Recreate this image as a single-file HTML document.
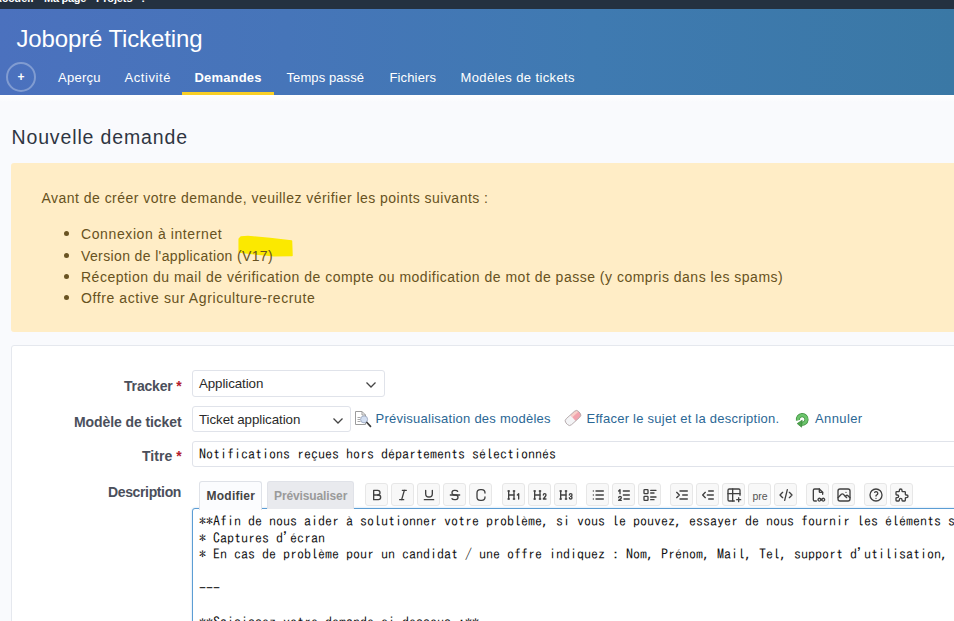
<!DOCTYPE html>
<html lang="fr">
<head>
<meta charset="utf-8">
<title>Nouvelle demande - Jobopré Ticketing</title>
<style>
html,body{margin:0;padding:0;}
body{width:954px;height:621px;overflow:hidden;position:relative;background:#f9fafd;font-family:"Liberation Sans",sans-serif;color:#2f3542;}
.abs{position:absolute;white-space:nowrap;}
.t{position:absolute;white-space:nowrap;line-height:1;}
#top{left:0;top:0;width:954px;height:9px;background:#243140;overflow:hidden;}
#top .t{color:#fff;font-weight:bold;font-size:11px;top:-7px;}
#header{left:0;top:9px;width:954px;height:86px;background:linear-gradient(90deg,#4b71be 0%,#4675b9 30%,#3f7ab1 62%,#3a78a5 100%);}
#ptitle{left:16.5px;top:27px;font-size:24px;color:#fff;}
#plus{left:6px;top:62px;width:26px;height:26px;border:2px solid rgba(255,255,255,.3);border-radius:50%;}
#plus span{position:absolute;left:0;top:0;width:26px;height:26px;line-height:27px;text-align:center;color:#fff;font-size:12px;font-weight:bold;}
.mi{color:#fff;font-size:13px;top:71px;}
#underline{left:182px;top:92px;width:92px;height:3px;background:#f9cf25;}
#h2{left:11.5px;top:127.5px;font-size:19.5px;color:#2f3542;}
#flash{left:11px;top:163px;width:960px;height:169px;background:#ffedc6;border-radius:3px;}
.ft{color:#675221;font-size:14px;}
.bul{width:5px;height:5px;border-radius:50%;background:#6a5422;left:64px;}
#hl{left:236px;top:234px;}
#box{left:11px;top:345px;width:960px;height:300px;background:#fff;border:1px solid #e5e8ee;border-radius:3px;box-sizing:border-box;}
.lab{font-weight:bold;font-size:14px;color:#4b4f5b;text-align:right;}
.req{color:#b3202c;}
.sel{background:#fff;border:1px solid #e0e3ea;border-radius:3px;box-sizing:border-box;}
.sel .t{font-size:13.33px;color:#2a2a2a;left:6px;}
.sel .t.mono{font-size:14px;color:#111;}
.lnk{color:#2b6795;font-size:13px;}
.mono{font-family:"IPAGothic","Liberation Mono",monospace;font-size:14px;color:#111;}
#ta{left:192px;top:508px;width:800px;height:140px;background:#fff;border:1px solid #5c9dd4;box-shadow:0 0 2px rgba(92,157,212,.45);border-radius:3px;box-sizing:border-box;}
.tab{box-sizing:border-box;font-weight:bold;font-size:12px;}
.jb{width:23px;height:23px;box-sizing:border-box;border:1px solid #e7e7e7;border-radius:3px;background:#f8f8f8;top:483px;}
.jb svg{position:absolute;left:3px;top:2.5px;width:16px;height:16px;fill:none;stroke:#404040;stroke-width:2;stroke-linecap:round;stroke-linejoin:round;}
.ap{display:inline-block;width:7px;overflow:visible;}
.jb .pre{font-size:10.5px;color:#555;left:3.5px;top:7px;}
/*CAL*/
#ptitle{letter-spacing:-0.132px;}
#m1{letter-spacing:0.259px;}
#m2{letter-spacing:0.585px;}
#m3{letter-spacing:0.179px;}
#m4{letter-spacing:0.091px;}
#m5{letter-spacing:0.141px;}
#m6{letter-spacing:0.372px;}
#h2{letter-spacing:0.866px;}
#f0{letter-spacing:0.470px;}
#f1{letter-spacing:0.605px;}
#f2{letter-spacing:0.372px;}
#f3{letter-spacing:0.499px;}
#f4{letter-spacing:0.593px;}
#l1{letter-spacing:-0.171px;}
#l2{letter-spacing:-0.088px;}
#l3{letter-spacing:0.027px;}
#l4{letter-spacing:-0.362px;}
#k1{letter-spacing:0.249px;}
#k2{letter-spacing:0.252px;}
#k3{letter-spacing:0.398px;}
#tab1t{letter-spacing:0.247px;}
#tab2t{letter-spacing:-0.118px;}
#tm1{letter-spacing:0.060px;}
#tm2{letter-spacing:-0.269px;}
#tm3{letter-spacing:-0.133px;}
#s1t{letter-spacing:-0.090px;}
#s2t{letter-spacing:-0.070px;}
/*ENDCAL*/
</style>
</head>
<body>
<div id="top" class="abs">
  <span class="t" id="tm1" style="left:-6px">Accueil</span>
  <span class="t" id="tm2" style="left:44px">Ma page</span>
  <span class="t" id="tm3" style="left:96px">Projets</span>
  <span class="t" id="tm4" style="left:140px">?</span>
</div>
<div id="header" class="abs"></div>
<div id="ptitle" class="t">Jobopré Ticketing</div>
<div id="plus" class="abs"><span>+</span></div>
<span class="t mi" id="m1" style="left:58px">Aperçu</span>
<span class="t mi" id="m2" style="left:124.5px">Activité</span>
<span class="t mi" id="m3" style="left:194.5px;font-weight:bold">Demandes</span>
<span class="t mi" id="m4" style="left:286.5px">Temps passé</span>
<span class="t mi" id="m5" style="left:389.5px">Fichiers</span>
<span class="t mi" id="m6" style="left:460.5px">Modèles de tickets</span>
<div id="underline" class="abs"></div>

<div class="abs" style="left:0;top:95px;width:954px;height:7px;background:linear-gradient(180deg,#ffffff,#f9fafd)"></div>
<div id="h2" class="t">Nouvelle demande</div>

<div id="flash" class="abs"></div>
<span class="t ft" id="f0" style="left:41.5px;top:191px">Avant de créer votre demande, veuillez vérifier les points suivants :</span>
<div class="abs bul" style="top:231px"></div>
<div class="abs bul" style="top:253px"></div>
<div class="abs bul" style="top:274px"></div>
<div class="abs bul" style="top:295px"></div>
<svg id="hl" class="abs" width="60" height="26" viewBox="0 0 60 26"><path d="M3.2 5 L5 3 L12 2.5 L34 4.5 L55.5 7 L56 21.5 L38 21.8 L20 20 L3.2 18 Z" fill="#fbe900" stroke="#fbe900" stroke-width="1.5" stroke-linejoin="round"/></svg>
<span class="t ft" id="f1" style="left:81px;top:227px">Connexion à internet</span>
<span class="t ft" id="f2" style="left:81px;top:249px">Version de l'application (V17)</span>
<span class="t ft" id="f3" style="left:81px;top:270px">Réception du mail de vérification de compte ou modification de mot de passe (y compris dans les spams)</span>
<span class="t ft" id="f4" style="left:81px;top:291px">Offre active sur Agriculture-recrute</span>

<div id="box" class="abs"></div>
<span class="t lab" id="l1" style="left:124px;top:379px">Tracker <span class="req">*</span></span>
<span class="t lab" id="l2" style="left:74px;top:415px">Modèle de ticket</span>
<span class="t lab" id="l3" style="left:142px;top:449px">Titre <span class="req">*</span></span>
<span class="t lab" id="l4" style="left:108px;top:485px">Description</span>

<div class="abs sel" id="s1" style="left:192px;top:370px;width:193px;height:27px"><span class="t" id="s1t" style="top:6px">Application</span>
<svg class="abs" style="left:172px;top:10px" width="12" height="8" viewBox="0 0 12 8"><path d="M1.5 1.5 L6 6 L10.5 1.5" fill="none" stroke="#444" stroke-width="1.25"/></svg></div>
<div class="abs sel" id="s2" style="left:192px;top:406px;width:159px;height:26px"><span class="t" id="s2t" style="top:6px">Ticket application</span>
<svg class="abs" style="left:139px;top:10px" width="12" height="8" viewBox="0 0 12 8"><path d="M1.5 1.5 L6 6 L10.5 1.5" fill="none" stroke="#444" stroke-width="1.25"/></svg></div>

<svg class="abs" id="ic1" style="left:354px;top:410px" width="18" height="18" viewBox="0 0 18 18"><path d="M1.5 1.5H8L11.5 5V14.5H1.5Z" fill="#fff" stroke="#9c9c9c" stroke-width="1"/><path d="M8 1.5V5H11.5" fill="none" stroke="#9c9c9c" stroke-width="1"/><path d="M3.5 7.5H6.5M3.5 9.5H6.5M3.5 11.5H6.5" stroke="#a8a8a8" stroke-width="1"/><circle cx="10.1" cy="9.4" r="3.5" fill="#d3dff2" stroke="#a4b0c6" stroke-width="1"/><path d="M12.9 12.5L16.5 16.3" stroke="#3a3a3a" stroke-width="1.7" stroke-linecap="round"/></svg>
<svg class="abs" id="ic2" style="left:564px;top:409px" width="19" height="18" viewBox="0 0 19 18"><defs><clipPath id="erc"><rect x="-8.5" y="-4" width="17" height="8" rx="3"/></clipPath></defs><g transform="translate(9,9) rotate(-42)"><g clip-path="url(#erc)"><rect x="-8.5" y="-4" width="9" height="8" fill="#f4f4f6"/><rect x="0" y="-4" width="9" height="8" fill="#f2a3ad"/><rect x="0" y="-4" width="9" height="3" fill="#f8cfc9"/></g><rect x="-8.5" y="-4" width="17" height="8" rx="3" fill="none" stroke="#b4a9ab" stroke-width="0.9"/></g></svg>
<svg class="abs" id="ic3" style="left:794px;top:411px" width="17" height="18" viewBox="0 0 17 18"><path d="M4.0 9.3A4.3 4.3 0 1 1 7.2 12.6" fill="none" stroke="#3f8f3f" stroke-width="4.2" stroke-linecap="butt"/><path d="M4.0 9.3A4.3 4.3 0 1 1 7.2 12.6" fill="none" stroke="#6cc46c" stroke-width="2.8" stroke-linecap="butt"/><path d="M8.2 9.2L3.2 12.6L7.6 16.2Z" fill="#4da54d" stroke="#3a873a" stroke-width="0.7" stroke-linejoin="round"/></svg>
<span class="t lnk" id="k1" style="left:375.5px;top:412px">Prévisualisation des modèles</span>
<span class="t lnk" id="k2" style="left:586.5px;top:412px">Effacer le sujet et la description.</span>
<span class="t lnk" id="k3" style="left:815px;top:412px">Annuler</span>

<div class="abs sel" id="s3" style="left:192px;top:441px;width:800px;height:26px"><span class="t mono" id="s3t" style="left:6px;top:5px">Notifications reçues hors départements sélectionnés</span></div>

<div id="ta" class="abs"></div>
<div class="abs tab" id="tab2" style="left:266.5px;top:481px;width:87.5px;height:28px;background:#e9eaee;border:1px solid #e0e2e8;border-bottom:none;border-radius:3px 3px 0 0;color:#9a9a9a"><span class="t" id="tab2t" style="left:6.5px;top:8px">Prévisualiser</span></div>
<div class="abs tab" id="tab1" style="left:199px;top:481px;width:62.5px;height:29px;background:#fbfcfe;border:1px solid #dfe2e8;border-bottom:none;border-radius:3px 3px 0 0;color:#444"><span class="t" id="tab1t" style="left:6.5px;top:8px">Modifier</span></div>

<!--TB-->
<div class="abs jb" style="left:365.2px"><svg viewBox="0 0 24 24"><path d="M7 5h6a3.5 3.5 0 0 1 0 7h-6z"/><path d="M13 12h1a3.5 3.5 0 0 1 0 7h-7v-7"/></svg></div>
<div class="abs jb" style="left:391.2px"><svg viewBox="0 0 24 24"><path d="M11 5h6"/><path d="M7 19h6"/><path d="M14 5l-4 14"/></svg></div>
<div class="abs jb" style="left:417.3px"><svg viewBox="0 0 24 24"><path d="M7 5v5a5 5 0 0 0 10 0v-5"/><path d="M5 19h14"/></svg></div>
<div class="abs jb" style="left:443.4px"><svg viewBox="0 0 24 24"><path d="M5 12h14"/><path d="M16 6.5a4 2 0 0 0 -4 -1.5h-1a3.5 3.5 0 0 0 0 7h2a3.5 3.5 0 0 1 0 7h-1.5a4 2 0 0 1 -4 -1.5"/></svg></div>
<div class="abs jb" style="left:469.4px"><svg viewBox="0 0 24 24"><path d="M18 9a5 5 0 0 0 -5 -5h-2a5 5 0 0 0 -5 5v6a5 5 0 0 0 5 5h2a5 5 0 0 0 5 -5"/></svg></div>
<div class="abs jb" style="left:501.5px"><svg viewBox="0 0 24 24"><path d="M19 18v-8l-2 2"/><path d="M4 6v12"/><path d="M12 6v12"/><path d="M11 18h2"/><path d="M3 18h2"/><path d="M4 12h8"/><path d="M3 6h2"/><path d="M11 6h2"/></svg></div>
<div class="abs jb" style="left:527.5px"><svg viewBox="0 0 24 24"><path d="M17 12a2 2 0 1 1 4 0c0 .591 -.417 1.318 -.816 1.858l-3.184 4.143h4"/><path d="M4 6v12"/><path d="M12 6v12"/><path d="M11 18h2"/><path d="M3 18h2"/><path d="M4 12h8"/><path d="M3 6h2"/><path d="M11 6h2"/></svg></div>
<div class="abs jb" style="left:553.5px"><svg viewBox="0 0 24 24"><path d="M19 14a2 2 0 1 0 -2 -2"/><path d="M17 16a2 2 0 1 0 2 -2"/><path d="M4 6v12"/><path d="M12 6v12"/><path d="M11 18h2"/><path d="M3 18h2"/><path d="M4 12h8"/><path d="M3 6h2"/><path d="M11 6h2"/></svg></div>
<div class="abs jb" style="left:585.6px"><svg viewBox="0 0 24 24"><path d="M9 6h11"/><path d="M9 12h11"/><path d="M9 18h11"/><path d="M5 6v.01"/><path d="M5 12v.01"/><path d="M5 18v.01"/></svg></div>
<div class="abs jb" style="left:611.6px"><svg viewBox="0 0 24 24"><path d="M11 6h9"/><path d="M11 12h9"/><path d="M12 18h8"/><path d="M4 16a2 2 0 1 1 4 0c0 .591 -.5 1 -1 1.5l-3 2.5h4"/><path d="M6 10v-6l-2 2"/></svg></div>
<div class="abs jb" style="left:637.7px"><svg viewBox="0 0 24 24"><path d="M13 5h8"/><path d="M13 9h5"/><path d="M13 15h8"/><path d="M13 19h5"/><rect x="3" y="4" width="6" height="6" rx="1"/><rect x="3" y="14" width="6" height="6" rx="1"/></svg></div>
<div class="abs jb" style="left:669.7px"><svg viewBox="0 0 24 24"><path d="M20 6h-11"/><path d="M20 12h-7"/><path d="M20 18h-11"/><path d="M4 8l4 4l-4 4"/></svg></div>
<div class="abs jb" style="left:695.8px"><svg viewBox="0 0 24 24"><path d="M20 6h-7"/><path d="M20 12h-9"/><path d="M20 18h-7"/><path d="M8 8l-4 4l4 4"/></svg></div>
<div class="abs jb" style="left:721.8px"><svg viewBox="0 0 24 24"><path d="M12.5 21h-7.5a2 2 0 0 1 -2 -2v-14a2 2 0 0 1 2 -2h14a2 2 0 0 1 2 2v7.5"/><path d="M3 10h18"/><path d="M10 3v18"/><path d="M16 19h6"/><path d="M19 16v6"/></svg></div>
<div class="abs jb" style="left:747.9px"><span class="t pre">pre</span></div>
<div class="abs jb" style="left:773.9px"><svg viewBox="0 0 24 24"><path d="M7 8l-4 4l4 4"/><path d="M17 8l4 4l-4 4"/><path d="M14 4l-4 16"/></svg></div>
<div class="abs jb" style="left:806.0px"><svg viewBox="0 0 24 24"><path d="M15.536 17.586a2.123 2.123 0 0 0 -2.929 0a1.951 1.951 0 0 0 0 2.828c.809 .781 2.12 .781 2.929 0l1.46 -1.41l1.46 -1.419"/><path d="M15.54 17.582l1.46 1.42l1.46 1.41c.809 .78 2.12 .781 2.929 0a1.951 1.951 0 0 0 0 -2.828a2.123 2.123 0 0 0 -2.929 0"/><path d="M14 3v4a1 1 0 0 0 1 1h4"/><path d="M9.5 21h-2.500a2 2 0 0 1 -2 -2v-14a2 2 0 0 1 2 -2h7l5 5v3"/></svg></div>
<div class="abs jb" style="left:832.0px"><svg viewBox="0 0 24 24"><path d="M15 8h.01"/><rect x="3" y="3" width="18" height="18" rx="3"/><path d="M3 16l5 -5c.928 -.893 2.072 -.893 3 0l5 5"/><path d="M14 14l1 -1c.928 -.893 2.072 -.893 3 0l3 3"/></svg></div>
<div class="abs jb" style="left:864.1px"><svg viewBox="0 0 24 24"><circle cx="12" cy="12" r="9"/><path d="M12 17v.01"/><path d="M12 13.5a1.5 1.5 0 0 1 1 -1.5a2.6 2.6 0 1 0 -3 -4"/></svg></div>
<div class="abs jb" style="left:890.1px"><svg viewBox="0 0 24 24"><path d="M4 7h3a1 1 0 0 0 1 -1v-1a2 2 0 0 1 4 0v1a1 1 0 0 0 1 1h3a1 1 0 0 1 1 1v3a1 1 0 0 0 1 1h1a2 2 0 0 1 0 4h-1a1 1 0 0 0 -1 1v3a1 1 0 0 1 -1 1h-3a1 1 0 0 1 -1 -1v-1a2 2 0 0 0 -4 0v1a1 1 0 0 1 -1 1h-3a1 1 0 0 1 -1 -1v-3a1 1 0 0 1 1 -1h1a2 2 0 0 0 0 -4h-1a1 1 0 0 1 -1 -1v-3a1 1 0 0 1 1 -1"/></svg></div>
<!--ENDTB-->
<div id="talines" class="abs mono" style="left:199px;top:513px;white-space:pre"><div style="height:17px;line-height:17px">**Afin de nous aider à solutionner votre problème, si vous le pouvez, essayer de nous fournir les éléments suivants :**</div><div style="height:16px;line-height:16px">* Captures d<span class="ap">’</span>écran</div><div style="height:17px;line-height:17px">* En cas de problème pour un candidat / une offre indiquez : Nom, Prénom, Mail, Tel, support d<span class="ap">’</span>utilisation, navigateur</div><div style="height:17px;line-height:17px">&nbsp;</div><div style="height:17px;line-height:17px">---</div><div style="height:17px;line-height:17px">&nbsp;</div><div style="height:17px;line-height:17px">**Saisissez votre demande ci-dessous :**</div></div>
</body>
</html>
